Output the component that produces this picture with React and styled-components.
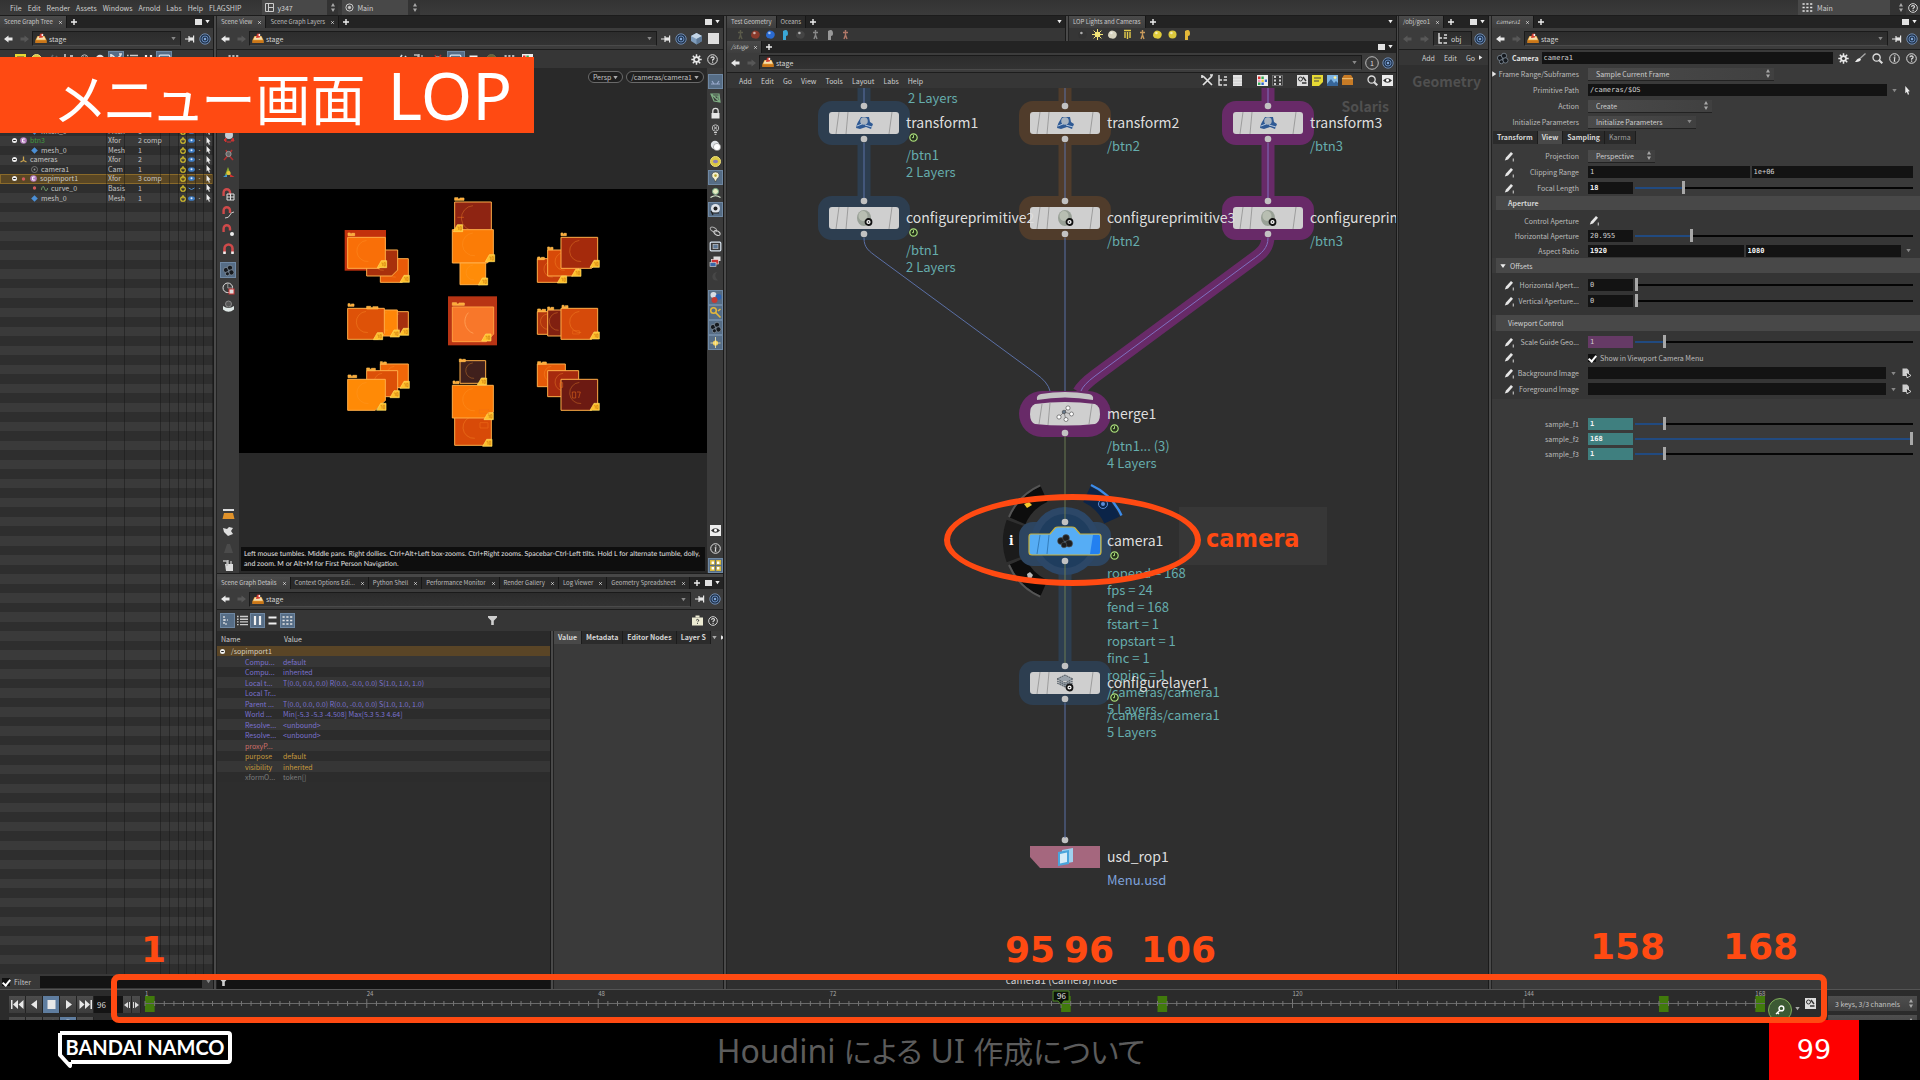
import React from "react";
import styled, { createGlobalStyle, css } from "styled-components";

const Global = createGlobalStyle`
  * { box-sizing: border-box; }
  body { margin: 0; background: #000; }
  body, button, input, select {
    font-family: "Noto Sans CJK JP", "Noto Sans", sans-serif;
    font-size: 7px;
    color: #c4c4c4;
  }
  button, input, select { border: 0; padding: 0; margin: 0; background: none; border-radius: 0; }
  svg { display: block; flex: none; }
`;

const ORANGE = "#ff4a12";

/* ---------- shell ---------- */
const Page = styled.div`
  position: relative;
  height: 100vh;
  display: flex;
  flex-direction: column;
  overflow: hidden;
  background: #000;
`;
const MenuBar = styled.header`
  height: 16px;
  flex: none;
  display: flex;
  align-items: center;
  background: linear-gradient(#333, #3b3b3b);
  border-bottom: 1px solid #1c1c1c;
`;
const Menus = styled.nav`
  display: flex;
  gap: ${(p) => p.$gap || 6}px;
  padding-left: ${(p) => p.$pad || 10}px;
`;
const MenuItem = styled.button`
  line-height: 14px;
  font-size: 7px;
  color: #cfcfcf;
  white-space: nowrap;
`;
const TopSelect = styled.label`
  display: flex;
  align-items: center;
  gap: 3px;
  height: 15px;
  width: ${(p) => p.$w}px;
  margin-left: ${(p) => p.$ml || 0}px;
  padding: 0 3px;
  background: linear-gradient(90deg, #484848 85%, #333 85%);
  select { appearance: none; flex: 1; min-width: 0; font-size: 7px; line-height: 12px; color: #d0d0d0; }
`;
const Spacer = styled.div`flex: 1;`;

const Desk = styled.main`
  flex: 1;
  min-height: 0;
  display: grid;
  grid-template-columns: 213fr 4px 506fr 4px 669fr 3px 89fr 4px 428fr;
  grid-template-rows: minmax(0, 1fr);
  background: #3a3a3a;
`;
const Split = styled.div`
  background: #4a4a4a;
  border-left: 1px solid #1a1a1a;
  border-right: 1px solid #222;
`;
const Pane = styled.section`
  position: relative;
  display: flex;
  flex-direction: column;
  min-width: 0;
  min-height: 0;
  overflow: hidden;
  background: ${(p) => p.$bg || "#3a3a3a"};
`;

/* ---------- tabs and path bars ---------- */
const TabRow = styled.div`
  height: 12px;
  flex: none;
  display: flex;
  align-items: stretch;
  background: #232323;
  padding-right: 2px;
`;
const TabButton = styled.button`
  display: flex;
  align-items: center;
  gap: 6px;
  padding: 0 4px;
  font-size: 6px;
  line-height: 10px;
  white-space: nowrap;
  color: ${(p) => (p.$on ? "#c8c8c8" : "#bdbdbd")};
  font-style: ${(p) => (p.$italic ? "italic" : "normal")};
  background: ${(p) => (p.$on ? "linear-gradient(#4a4a4a, #3e3e3e)" : "#2a2a2a")};
  border-right: 1px solid #171717;
`;
const IconButton = styled.button`
  flex: none;
  width: ${(p) => p.$w || 16}px;
  height: ${(p) => p.$h || p.$w || 16}px;
  display: grid;
  place-items: center;
  opacity: ${(p) => (p.$dim ? 0.3 : 1)};
  ${(p) => p.$on && css`background: #566d86; box-shadow: inset 0 0 0 1px #6f88a3;`}
`;
const Gap = styled.span`width: ${(p) => p.$w}px; flex: none;`;
const PathRow = styled.div`
  height: ${(p) => p.$h || 22}px;
  flex: none;
  display: flex;
  align-items: center;
  gap: 2px;
  padding: 0 2px;
  background: #3c3c3c;
  border-bottom: 1px solid #1d1d1d;
`;
const PathBox = styled.div`
  flex: 1;
  min-width: 0;
  height: 15px;
  display: flex;
  align-items: center;
  gap: 2px;
  padding: 0 4px 0 2px;
  background: linear-gradient(#2c2c2c, #333);
  border: 1px solid #1a1a1a;
  border-bottom-color: #4a4a4a;
  input { flex: 1; min-width: 0; font-size: 7px; line-height: 12px; color: #d6d6d6; }
`;

const Arrow = ({ flip, dim }) => (
  <svg width="10" height="8" viewBox="0 0 10 8" opacity={dim ? 0.35 : 1}>
    <path d={flip ? "M10 4 L5.5 .5 V2.6 H1.5 V5.4 H5.5 V7.5 Z" : "M0 4 L4.5 .5 V2.6 H8.5 V5.4 H4.5 V7.5 Z"} fill={dim ? "#8a8a8a" : "#e8e8e8"} />
  </svg>
);
const Caret = ({ c = "#aaa", s = 5 }) => (
  <svg width={s} height={s} viewBox="0 0 5 5"><path d="M.3 1 H4.7 L2.5 4.2 Z" fill={c} /></svg>
);
const RightCaret = ({ s = 6 }) => (
  <svg width={s} height={s} viewBox="0 0 5 5"><path d="M1 .2 V4.8 L4.4 2.5 Z" fill="#e6e6e6" /></svg>
);
const UpDown = () => (
  <svg width="4" height="9" viewBox="0 0 4 9"><path d="M2 0 L4 3.4 H0 Z M2 9 L4 5.6 H0 Z" fill="#a8a8a8" /></svg>
);
const Plus = () => (
  <svg width="6" height="6" viewBox="0 0 6 6"><path d="M3 0 V6 M0 3 H6" stroke="#eee" strokeWidth="1.4" /></svg>
);
const Cross = () => (
  <svg width="3" height="3" viewBox="0 0 3 3"><path d="M.3 .3 L2.7 2.7 M2.7 .3 L.3 2.7" stroke="#ddd" strokeWidth=".9" /></svg>
);
const PaneSquare = () => (
  <svg width="7" height="6" viewBox="0 0 7 6"><rect width="7" height="6" fill="#e2e2e2" /></svg>
);
const Stage = () => (
  <svg width="12" height="11" viewBox="0 0 12 11">
    <path d="M2.5 3 H9.5 L11.5 7 V10 H.5 V7 Z" fill="#e59a2c" />
    <path d="M2.8 3.4 H9.2 L10.7 6.8 H1.3 Z" fill="#f6dfb0" />
    <path d="M.5 7.4 H11.5 V10 H.5 Z" fill="#c9761a" />
    <path d="M4 5 L5 .8 L8 .4 L7.8 4.6 Z" fill="#d03b30" />
    <circle cx="7.4" cy="2" r="1" fill="#fff" />
  </svg>
);
const Pin = () => (
  <svg width="10" height="8" viewBox="0 0 10 8"><path d="M0 4 H4 M4 1 V7 M8.6 .6 V7.4" stroke="#e6e6e6" strokeWidth="1.2" /><path d="M4 2.4 H8.6 V5.6 H4 Z" fill="#e6e6e6" /></svg>
);
const Target = () => (
  <svg width="12" height="12" viewBox="0 0 12 12">
    <circle cx="6" cy="6" r="5.2" fill="#223650" stroke="#7f9cc4" strokeWidth=".8" />
    <circle cx="6" cy="6" r="3" fill="none" stroke="#6b8fc2" strokeWidth=".9" />
    <circle cx="6" cy="6" r="1.2" fill="#86a8d8" />
  </svg>
);
const Gear = ({ s = 11 }) => (
  <svg width={s} height={s} viewBox="0 0 11 11">
    <g stroke="#e8e8e8" strokeWidth="1.5"><path d="M5.5 .3 V10.7 M.3 5.5 H10.7 M1.8 1.8 L9.2 9.2 M9.2 1.8 L1.8 9.2" /></g>
    <circle cx="5.5" cy="5.5" r="3.3" fill="#e8e8e8" /><circle cx="5.5" cy="5.5" r="1.6" fill="#3a3a3a" />
  </svg>
);
const RingMark = ({ kind, s = 11 }) => (
  <svg width={s} height={s} viewBox="0 0 11 11" fill="none" stroke="#dedede">
    <circle cx="5.5" cy="5.5" r="4.8" />
    {kind === "help"
      ? <path d="M3.9 4.3 Q4 2.8 5.5 2.8 Q7.2 2.9 7.1 4.3 Q7 5.2 5.6 5.9 V6.8 M5.6 7.6 V8.7" strokeWidth="1.2" />
      : <path d="M5.8 2.3 V3.5 M4.7 4.8 H5.8 L5.3 8.3 H6.4" strokeWidth="1.1" />}
  </svg>
);
const Funnel = () => (
  <svg width="9" height="9" viewBox="0 0 9 9"><path d="M0 0 H9 V1.4 L5.8 4.8 V9 H3.2 V4.8 L0 1.4 Z" fill="#cfcfcf" /></svg>
);
const Magnifier = () => (
  <svg width="11" height="11" viewBox="0 0 11 11" fill="none" stroke="#dcdcdc"><circle cx="4.6" cy="4.6" r="3.6" strokeWidth="1.3" /><path d="M7.2 7.2 L10.3 10.3" strokeWidth="2" /></svg>
);
const Brush = () => (
  <svg width="11" height="10" viewBox="0 0 11 10"><path d="M10.5 .5 L5 5.5" stroke="#aaa" strokeWidth="1.3" /><path d="M0 9 Q2.4 5.2 4.6 5 L6 6.6 Q5 9.4 0 9 Z" fill="#eee" /></svg>
);
const Pointer = ({ h = 9 }) => (
  <svg width="5" height={h} viewBox="0 0 5 9"><path d="M.3 0 L4.9 5.2 L3.1 5.4 L4.1 8.3 L2.9 8.8 L1.9 5.9 L.3 7.2 Z" fill="#eee" /></svg>
);

const Tabs = ({ items, grow, end = true, pane = true }) => (
  <TabRow role="tablist">
    {items.map((t, i) => (
      <TabButton key={t} role="tab" $on={i === 0} $italic={t === "/stage" || t === "camera1"} aria-selected={i === 0}>
        <span>{t}</span>{!grow && <Cross />}
      </TabButton>
    ))}
    <IconButton aria-label="Add tab" $w={14} $h={11}><Plus /></IconButton>
    <Spacer />
    {end && pane && <IconButton aria-label="Pane layout" $w={10} $h={11}><PaneSquare /></IconButton>}
    {end && <IconButton aria-label="Pane menu" $w={8} $h={11}><Caret c="#eee" /></IconButton>}
  </TabRow>
);
const PathBar = ({ h, children, tail }) => (
  <PathRow $h={h}>
    <IconButton aria-label="Back" $w={13}><Arrow /></IconButton>
    <IconButton aria-label="Forward" $w={13}><Arrow flip dim /></IconButton>
    <PathBox>
      <Stage />
      <input aria-label="Path" defaultValue="stage" />
      <Caret c="#888" />
    </PathBox>
    {children || <><IconButton aria-label="Pin" $w={13}><Pin /></IconButton><IconButton aria-label="Follow" $w={13}><Target /></IconButton></>}
    {tail}
  </PathRow>
);

/* ---------- scene graph tree ---------- */
const ToolRow = styled.div`
  height: ${(p) => p.$h || 18}px;
  flex: none;
  display: flex;
  align-items: center;
  gap: ${(p) => p.$gap || 0}px;
  padding: 0 ${(p) => p.$pr || 3}px 0 ${(p) => p.$pad || 3}px;
  background: #363636;
`;
const TreeHead = styled.div`height: 11px; flex: none; background: #2c2c2c;`;
const TreeBody = styled.div`
  flex: 1;
  min-height: 0;
  display: grid;
  grid-auto-rows: minmax(0, 1fr);
`;
const TreeRow = styled.div`
  min-height: 0;
  display: grid;
  grid-template-columns: 107fr 18fr 36fr 9fr 9fr 8fr 9fr 8fr 9fr;
  grid-template-rows: minmax(0, 1fr);
  font-size: 7px;
  line-height: 9px;
  white-space: nowrap;
  background: ${(p) => (p.$sel ? "#5a4724" : p.$odd ? "#2e2e2e" : "#3a3a3a")};
  ${(p) => p.$sel && css`box-shadow: inset 0 0 0 1px #8a6a2a;`}
  > * { border-right: 1px solid rgba(20, 20, 20, 0.45); min-width: 0; min-height: 0; display: flex; align-items: center; }
`;
const TreeName = styled.div`
  padding-left: ${(p) => p.$d}px;
  gap: 3px;
  color: ${(p) => p.$c || "#c6c6c6"};
`;
const TreeCell = styled.div`padding-left: ${(p) => p.$pl || 0}px; justify-content: ${(p) => (p.$mid ? "center" : "start")};`;

const Knob = () => <svg width="5" height="5" viewBox="0 0 5 5"><circle cx="2.5" cy="2.5" r="2.5" fill="#eee" /><path d="M1.2 2.5 H3.8" stroke="#222" /></svg>;
const Glyph = ({ k }) => (
  <svg width="7" height="7" viewBox="0 0 7 7">
    {k === "mesh" && <path d="M3.5 .2 L6.8 3.5 L3.5 6.8 L.2 3.5 Z" fill="#4b8fd6" />}
    {k === "comp" && <><circle cx="3.5" cy="3.5" r="3.3" fill="#b77fc0" /><path d="M4.8 2 H2.6 V5 H4.8" stroke="#fff" fill="none" /></>}
    {k === "xf" && <path d="M3.5 .5 V5 M.5 6 L3.5 4.5 L6.5 6" stroke="#c9a24e" fill="none" strokeWidth="1.3" />}
    {k === "cam" && <><circle cx="3.5" cy="3.5" r="3" fill="#2a2a2a" stroke="#777" /><circle cx="3.5" cy="3.5" r="1" fill="#999" /></>}
    {k === "curve" && <path d="M.2 5 Q2 -1.5 3.5 3.5 T6.8 3" stroke="#6d9a68" fill="none" />}
  </svg>
);
const Power = () => <svg width="6" height="7" viewBox="0 0 6 7" fill="none" stroke="#d9c22b" strokeWidth="1.1"><circle cx="3" cy="4" r="2.3" /><path d="M3 0 V3.4" /></svg>;
const Eye = ({ off }) => <svg width="7" height="5" viewBox="0 0 7 5">{off ? <path d="M.5 2 Q3.5 5 6.5 2" stroke="#4d8dd0" fill="none" /> : <><ellipse cx="3.5" cy="2.5" rx="3.4" ry="2.3" fill="#3d7cc4" /><circle cx="3.5" cy="2.3" r="1" fill="#dfeeff" /></>}</svg>;

const TREE = {
  5: { n: "mesh_0", t: "Mesh", c: "1", g: "mesh", d: 31 },
  6: { n: "btn3", t: "Xfor", c: "2 comp", g: "comp", d: 12, knob: 1, col: "#3f9a3f" },
  7: { n: "mesh_0", t: "Mesh", c: "1", g: "mesh", d: 31 },
  8: { n: "cameras", t: "Xfor", c: "2", g: "xf", d: 12, knob: 1 },
  9: { n: "camera1", t: "Cam", c: "1", g: "cam", d: 31 },
  10: { n: "sopimport1", t: "Xfor", c: "3 comp", g: "comp", d: 12, knob: 1, dot: 1, sel: 1 },
  11: { n: "curve_0", t: "Basis", c: "1", g: "curve", d: 31, dot: 1, off: 1 },
  12: { n: "mesh_0", t: "Mesh", c: "1", g: "mesh", d: 31 },
};
const Dot = () => <svg width="7" height="4" viewBox="0 0 7 4"><circle cx="3.5" cy="2" r="1.7" fill="#d05a5a" /></svg>;

const Tree = () => (
  <TreeBody>
    {Array.from({ length: 94 }, (_, i) => {
      const r = TREE[i];
      return (
        <TreeRow key={i} $odd={i % 2 === 1} $sel={r && r.sel}>
          <TreeName $d={r ? r.d : 0} $c={r && r.col}>
            {r && r.knob && <Knob />}{r && r.dot && <Dot />}{r && <Glyph k={r.g} />}{r && <span>{r.n}</span>}
          </TreeName>
          <TreeCell $pl={1}>{r && r.t}</TreeCell>
          <TreeCell $pl={13}>{r && r.c}</TreeCell>
          <TreeCell />
          <TreeCell />
          <TreeCell $mid>{r && <Power />}</TreeCell>
          <TreeCell $mid>{r && <Eye off={r.off} />}</TreeCell>
          <TreeCell $mid>{r && "·"}</TreeCell>
          <TreeCell $mid>{r && <Pointer h={8} />}</TreeCell>
        </TreeRow>
      );
    })}
  </TreeBody>
);
const FilterRow = styled.div`
  height: 15px;
  flex: none;
  display: flex;
  align-items: center;
  gap: 4px;
  padding: 1px 2px;
  background: ${(p) => p.$bg || "#383838"};
  label { display: flex; align-items: center; gap: 4px; width: 34px; font-size: 7px; line-height: 12px; }
`;
const Field = styled.input`
  flex: ${(p) => (p.$w ? "none" : 1)};
  width: ${(p) => (p.$w ? `${p.$w}px` : "auto")};
  min-width: 0;
  height: ${(p) => p.$h || 12}px;
  padding: 0 2px;
  font-family: "DejaVu Sans Mono", monospace;
  font-size: 7px;
  font-weight: ${(p) => (p.$b ? 700 : 400)};
  color: ${(p) => (p.$b ? "#f2f2f2" : "#d0d0d0")};
  background: ${(p) => p.$bg || "#131313"};
`;
const Check = styled.input.attrs({ type: "checkbox" })`
  appearance: none;
  width: 8px;
  height: 8px;
  background: #111;
  display: grid;
  place-items: center;
  &:checked::after {
    content: "";
    width: 3px;
    height: 6px;
    border: solid #fff;
    border-width: 0 2px 2px 0;
    transform: rotate(40deg);
  }
`;

/* ---------- scene view ---------- */
const ViewArea = styled.div`
  height: 505px;
  flex: none;
  display: flex;
  background: #292929;
`;
const SideBar = styled.div`
  width: ${(p) => p.$w}px;
  flex: none;
  display: flex;
  flex-direction: column;
  align-items: center;
  padding: ${(p) => p.$pad};
  background: #3a3a3a;
`;
const ToolGroup = styled.div`
  display: flex;
  flex-direction: column;
  gap: ${(p) => p.$gap || 0}px;
  margin-top: ${(p) => p.$mt || 0}px;
`;
const Viewport = styled.div`
  flex: 1;
  min-width: 0;
  display: flex;
  flex-direction: column;
`;
const Pills = styled.div`
  height: 121px;
  flex: none;
  display: flex;
  justify-content: flex-end;
  align-items: flex-start;
  gap: 3px;
  padding: 3px 3px 0;
`;
const Pill = styled.button`
  height: 12px;
  display: flex;
  align-items: center;
  gap: 2px;
  padding: 0 4px;
  line-height: 10px;
  border: 1px solid #6a6a6a;
  border-radius: 6px;
  background: #1f1f1f;
`;
const Render = styled.svg`width: 100%; height: auto; aspect-ratio: 1404 / 791; background: #000;`;
const Hint = styled.p`
  margin: auto 2px 2px;
  padding: 2px 3px;
  font-family: Lato, "Noto Sans", sans-serif;
  font-size: 7px;
  line-height: 10px;
  text-rendering: geometricPrecision;
  color: #e2e2e2;
  background: #0e0e0e;
`;
const HSplit = styled.div`height: 4px; flex: none; background: #474747; border-top: 1px solid #1d1d1d;`;

const box = (x, y, w, h, f, cut = 18) => [x, y, w, h, f, cut];
const TILES = [
  box(511, 776, 84, 71, "#e85a08"), box(470, 750, 93, 78, "#a8300c"), box(413, 712, 113, 93, "#f96f08"),
  box(734, 606, 110, 110, "#8e2412"), box(727, 689, 123, 100, "#fb7c06"), box(750, 789, 77, 65, "#ff8c08"),
  box(982, 776, 84, 71, "#c63c0a"), box(1013, 750, 93, 78, "#d84a08"), box(1053, 712, 110, 93, "#a42a0c"),
  box(540, 935, 55, 68, "#a5300e"), box(500, 930, 62, 78, "#ff8608"), box(413, 925, 110, 93, "#de5208"),
  box(982, 935, 62, 68, "#b2360e"), box(1013, 930, 60, 78, "#802010"), box(1053, 925, 110, 93, "#d64a0a"),
  box(511, 1092, 84, 71, "#f16708"), box(470, 1112, 93, 78, "#dc5008"), box(413, 1138, 113, 93, "#ff8a06", 30),
  box(750, 1082, 77, 68, "#40201c"), box(734, 1240, 110, 96, "#d84a08"), box(727, 1156, 123, 98, "#fb7806"),
  box(982, 1092, 84, 68, "#e55a08"), box(1013, 1112, 93, 78, "#a62a0e"), box(1053, 1138, 110, 93, "#6c1a12"),
];
const TITLES = [[414, 696, 20], [734, 590, 28], [1053, 696, 16], [1013, 738, 16], [983, 768, 20], [414, 908, 18], [470, 916, 34], [983, 924, 24], [1013, 918, 18], [1056, 913, 18], [414, 1122, 26], [470, 1101, 26], [511, 1082, 18], [748, 1074, 18], [983, 1082, 26], [727, 905, 36], [729, 1140, 18]];
const BADGES = [[570, 826], [502, 782], [826, 764], [805, 834], [1140, 781], [1085, 808], [1042, 828], [490, 998], [540, 990], [568, 985], [1140, 996], [500, 1210], [540, 1172], [570, 1144], [822, 1238], [818, 1318], [802, 1134], [1140, 1210], [815, 1002], [730, 674]];
const RenderedMenus = () => (
  <Render viewBox="87 567 1404 791" role="img" aria-label="Rendered menu tiles">
    <rect x="404" y="690" width="124" height="122" fill="#c2300c" />
    {TILES.map(([x, y, w, h, f, c], i) => (
      <g key={i}>
        <path d={`M${x} ${y} H${x + w} V${y + h - c} L${x + w - c} ${y + h} H${x} Z`} fill={f} stroke="#ffae48" strokeWidth="3" />
        <path d={`M${x + w * 0.5} ${y + h * 0.1} A${h * 0.33} ${h * 0.33} 0 0 0 ${x + w * 0.55} ${y + h * 0.78}`} fill="none" stroke="#ff9a30" strokeOpacity=".4" strokeWidth="2.5" />
      </g>
    ))}
    <rect x="714" y="889" width="147" height="147" fill="#b83414" />
    <path d="M727 921 H851 V1002 L829 1025 H727 Z" fill="#f8772a" stroke="#ffa040" strokeWidth="3" />
    <path d="M775 938 A38 38 0 0 0 790 1000" fill="none" stroke="#ff9b50" strokeWidth="3" />
    {TITLES.map(([x, y, w], i) => <path key={i} d={`M${x} ${y + 3} h${w * 0.35} v4 h${w * 0.2} v-3 h${w * 0.45} v7 h-${w} Z`} fill="#ffa838" stroke="#ffc050" strokeWidth="2" />)}
    {BADGES.map(([x, y], i) => <path key={i} d={`M${x} ${y + 21} L${x + 12} ${y} H${x + 28} V${y + 21} Z`} fill="#ffc02c" stroke="#ffdc62" strokeWidth="2" />)}
    {BADGES.map(([x, y], i) => <path key={i} d={`M${x + 12} ${y + 7} h4 v9 M${x + 20} ${y + 6} h4 v10 h-4 Z`} fill="none" stroke="#c2700c" strokeWidth="1.5" />)}
    <g fill="none" stroke="#f0701a" strokeWidth="2" strokeOpacity=".8">
      <path d="M1087 1176 h10 v18 h-10 Z M1101 1176 h10 l-5 18 M1050 1148 h8 v14 h-8 Z M1088 992 h20 v10 h-20 Z M808 1230 h28 v10 h-28 Z M810 1268 h24 v16 h-24 Z M742 652 h20" />
    </g>
  </Render>
);

const Tool = ({ k }) => (
  <svg width="13" height="13" viewBox="0 0 13 13" fill="none">
    {k === "magnet" && <><path d="M2.5 11 V6.5 A4 4 0 0 1 10.5 6.5 V11" stroke="#cf4a4a" strokeWidth="2.6" /><path d="M2.5 9.5 V12 M10.5 9.5 V12" stroke="#eee" strokeWidth="2.6" /></>}
    {k === "snapgrid" && <><path d="M1.6 8 V4.4 A3.2 3.2 0 0 1 8 4.4 V7" stroke="#cf4a4a" strokeWidth="2.4" /><path d="M5 6 H12 V12 H5 Z M8.5 6 V12 M5 9 H12" stroke="#ddd" /></>}
    {k === "snapcurve" && <><path d="M1.6 8 V4.4 A3.2 3.2 0 0 1 8 4.4 V7" stroke="#cf4a4a" strokeWidth="2.4" /><path d="M3 12 Q7 12 8 9 T12 6" stroke="#ccc" /></>}
    {k === "snappoint" && <><path d="M1.6 8 V4.4 A3.2 3.2 0 0 1 8 4.4 V6.6" stroke="#cf4a4a" strokeWidth="2.4" /><circle cx="10" cy="10" r="2" fill="#eee" /></>}
    {k === "handle" && <><circle cx="7" cy="5" r="4" fill="#c4ccd4" /><path d="M2 10 L4 8 V12 Z M11 8 L12 11 L9 11 Z M5 12 H9" fill="#c33" stroke="#c33" /></>}
    {k === "pose" && <><path d="M2 12 L6.5 7 L11 12 M4 2 L6.5 7 L10 2" stroke="#b03030" strokeWidth="1.6" /><circle cx="6.5" cy="6" r="2.6" fill="#666" stroke="#999" /></>}
    {k === "axes" && <><path d="M6 1 L9 9 L3 9 Z" fill="#8fae2c" /><circle cx="6.6" cy="7" r="2" fill="#e6c23a" /><path d="M8 8 L12.5 11 L8 11 Z" fill="#c33" /><path d="M5 8 L1 11 L5 11 Z" fill="#49c" /></>}
    {k === "reel" && <g fill="#15191e" stroke="#8a96a4" strokeWidth=".7"><circle cx="4" cy="6" r="2.6" /><circle cx="8" cy="3.8" r="2.6" /><circle cx="9.4" cy="8.4" r="2.6" /><circle cx="5.4" cy="9.8" r="2" /></g>}
    {k === "region" && <><circle cx="5.8" cy="5.8" r="4.8" stroke="#ddd" /><path d="M5.8 1 V6 H11" stroke="#999" /><rect x="7" y="7" width="5" height="5" fill="#ddd" stroke="#c33" /></>}
    {k === "dome" && <><circle cx="6.5" cy="4" r="3" fill="#555" stroke="#888" /><path d="M1 6 Q6.5 10 12 6 V9.5 Q6.5 14 1 9.5 Z" fill="#dfe8e6" /></>}
    {k === "tray" && <><path d="M1 2 H12" stroke="#ddd" strokeWidth="2" /><path d="M2 5 H11 L12.5 11 H.5 Z" fill="#e0922a" /></>}
    {k === "hand" && <path d="M1 3 L5 4 L7 2 L11 3 L9 6 L11 9 L6 11 L2 7 Z" fill="#dedede" />}
    {k === "cone" && <path d="M5 2 H8 L11 11 H2 Z" fill="#4b4b4b" />}
    {k === "cup" && <><path d="M3 5 H11 V12 H4 Z" fill="#ddd" /><path d="M1 2 H5 V7 M6 1 V5 M9 2 V5" stroke="#bbb" strokeWidth="1.4" /></>}
    {k === "plane" && <path d="M2 9 H11 M3 6 L5 9 M10 6 L8 9" stroke="#9ac" strokeWidth="1.2" />}
    {k === "wire" && <path d="M2 3 L10 3 L11 11 L5 10 Z M4 5 H9 V9 M2 3 L11 11" stroke="#7fae84" strokeWidth="1.2" />}
    {k === "lock" && <><path d="M3.8 6 V4 A2.7 2.7 0 0 1 9.2 4 V6" stroke="#ddd" strokeWidth="1.3" /><rect x="2.5" y="6" width="8" height="5.5" fill="#e6e6e6" /></>}
    {k === "bulb" && <><circle cx="6.5" cy="5" r="3.2" stroke="#bbb" /><path d="M5 3.6 L8 6.4 M8 3.6 L5 6.4 M5 9.5 H8 M5.6 11.3 H7.4" stroke="#ccc" /></>}
    {k === "sphere" && <><circle cx="6" cy="6" r="4.2" fill="#dfe3e6" /><circle cx="8" cy="8" r="3.6" fill="#fff" stroke="#888" strokeWidth=".6" /></>}
    {k === "ring" && <><circle cx="6.5" cy="6.5" r="5" fill="#dcc944" stroke="#efe07a" /><ellipse cx="6.5" cy="6.5" rx="2.6" ry="1.8" fill="#8a7fb8" /></>}
    {k === "light" && <><path d="M6.5 1 A3.4 3.4 0 0 1 8.4 7.4 L6.5 11 L4.6 7.4 A3.4 3.4 0 0 1 6.5 1 Z" fill="#f2f0cf" stroke="#333" strokeWidth=".6" /><circle cx="6.5" cy="4.6" r="1.3" fill="#b8a62c" /></>}
    {k === "lightfloor" && <><circle cx="6.5" cy="4.4" r="3" fill="#e6ecc0" stroke="#7a8" /><path d="M1.5 10.5 Q6.5 7 11.5 10.5" stroke="#d8e8d0" strokeWidth="1.2" /></>}
    {k === "cube" && <><path d="M6.5 1 L12 4 V9 L6.5 12.4 L1 9 V4 Z" fill="#7f9dbd" /><path d="M6.5 1 L12 4 L6.5 7 L1 4 Z" fill="#c4d5e6" /><path d="M6.5 7 L12 4 V9 L6.5 12.4 Z" fill="#5d7896" /></>}
    {k === "square" && <rect x="1" y="1" width="11" height="11" fill="#dfdfdf" />}
    {k === "persp" && <><circle cx="6.5" cy="5.5" r="4.5" fill="#dfe4ea" /><circle cx="6.5" cy="5.5" r="2" fill="#222" /><path d="M3 10 L10 10 M2 8 L4 12" stroke="#222" strokeWidth="1.2" /></>}
    {k === "link" && <><ellipse cx="4.5" cy="4.5" rx="3.4" ry="2" stroke="#aaa" transform="rotate(30 4.5 4.5)" /><ellipse cx="8" cy="8" rx="3.4" ry="2" stroke="#ccc" transform="rotate(30 8 8)" /></>}
    {k === "frame" && <><rect x="1.2" y="2.2" width="10.6" height="8.6" rx="1" stroke="#dbe7f2" strokeWidth="1.2" /><rect x="4" y="4.3" width="5" height="4.4" fill="#5d7896" stroke="#ccc" strokeWidth=".6" /></>}
    {k === "layers" && <><rect x="4.5" y="1.5" width="7" height="4.5" fill="#ddd" /><rect x="2.5" y="4.5" width="7" height="4.5" fill="#c33" stroke="#eee" strokeWidth=".6" /><rect x="1" y="7.5" width="6" height="4" fill="#3a66a8" stroke="#ddd" strokeWidth=".6" /></>}
    {k === "moon" && <path d="M8 2 Q4 6 9 10.5 Q3 11 3.4 6 Q4 2.6 8 2 Z" fill="#666" />}
    {k === "balls" && <><circle cx="4.5" cy="4" r="3" fill="#d8dde4" /><circle cx="9.4" cy="6" r="3" fill="#2c62b4" /><circle cx="5.5" cy="9" r="3" fill="#c23a34" /></>}
    {k === "key" && <><circle cx="4.5" cy="4.5" r="2.8" stroke="#e4b83c" strokeWidth="1.5" /><path d="M6.4 6.4 L11.5 11.5 M9 5 L11.5 3" stroke="#e4b83c" strokeWidth="1.6" /></>}
    {k === "spark" && <><circle cx="6.5" cy="7" r="2.6" fill="#f4cf4e" /><path d="M6.5 1 V12 M1.5 7 H11.5" stroke="#f7e7a6" strokeWidth=".8" /></>}
    {k === "eye" && <><rect x="1" y="1" width="11" height="11" fill="#ececec" /><path d="M2 6.5 Q6.5 1.8 11 6.5 Q6.5 11 2 6.5 Z" fill="#333" /><circle cx="6.5" cy="6.3" r="1.5" fill="#fff" /></>}
    {k === "quad" && <><rect x="1" y="1" width="11" height="11" fill="#d9b93c" /><path d="M6.5 1 V12 M1 6.5 H12" stroke="#5b6f88" strokeWidth="1.4" /><path d="M2.6 2.6 H5 V5 H2.6 Z M8 2.6 H10.4 V5 H8 Z M2.6 8 H5 V10.4 H2.6 Z M8 8 H10.4 V10.4 H8 Z" fill="#fff" /></>}
    {k === "tree" && <path d="M3 2 V10 H7 M3 6 H7" stroke="#eee" strokeWidth="1.2" strokeDasharray="2 1" />}
    {k === "list" && <path d="M1 2.5 H2.6 M4 2.5 H12 M1 5.2 H2.6 M4 5.2 H12 M1 7.9 H2.6 M4 7.9 H12 M1 10.6 H2.6 M4 10.6 H12" stroke="#ccc" strokeWidth="1.4" />}
    {k === "bars" && <path d="M4 2 V11 M9 2 V11" stroke="#f0f0f0" strokeWidth="2.2" />}
    {k === "rows" && <path d="M2.5 3.5 H10.5 M2.5 9.5 H10.5" stroke="#f0f0f0" strokeWidth="2.2" />}
    {k === "dots" && <path d="M1.5 3 H12 M1.5 6.5 H12 M1.5 10 H12" stroke="#e4e4e4" strokeWidth="1.6" strokeDasharray="2.2 1.6" />}
    {k === "camq" && <><rect x="1" y="3.5" width="11" height="8" fill="#ecead2" /><path d="M4.5 3.5 V1.5 H8.5 V3.5" fill="#ecead2" /><path d="M5.2 6.2 Q6.5 4.6 7.8 6.2 Q7.6 7.4 6.5 8 M6.5 9.2 V10" stroke="#333" /></>}
    {k === "slash" && <path d="M2 10 L7 2 M5 12 L11 3" stroke="#cfd8df" strokeWidth="1.6" />}
    {k === "wrench" && <path d="M2 2 L11 11 M11 2 L2 11 M1 1 V4 M12 1 H9" stroke="#e2e2e2" strokeWidth="1.7" />}
    {k === "hier" && <path d="M3 1 V11 H6 M3 6 H6 M8 3 H11 M7.5 6 H11 M7.5 11 H11" stroke="#ddd" strokeWidth="1.4" />}
    {k === "page" && <><rect x="2" y="1" width="9" height="11" fill="#e4e4e4" /><path d="M2 4 H11 M2 7 H11 M2 10 H11" stroke="#bbb" strokeWidth=".6" /></>}
    {k === "palette" && <><rect x="1" y="1" width="11" height="11" fill="#eee" /><path d="M2 2.5 H4.5 V5 H2 Z" fill="#d33" /><path d="M5.4 2.5 H7.8 V5 H5.4 Z M2 8.5 H4.5 V11 H2 Z" fill="#3a5" /><path d="M8.8 5.6 H11 V8 H8.8 Z M5.4 8.5 H7.8 V11 H5.4 Z" fill="#36c" /><path d="M2 5.6 H4.5 V8 H2 Z" fill="#e9b" /><path d="M5.4 5.6 H7.8 V8 H5.4 Z" fill="#ec4" /></>}
    {k === "dotgrid" && <><rect x="1.5" y="1.5" width="10" height="10" stroke="#777" strokeWidth=".8" /><path d="M3 3 H12 M3 6.5 H12 M3 10 H12" stroke="#ccc" strokeWidth="1.8" strokeDasharray="2 3" /></>}
    {k === "image" && <><rect x="1" y="1" width="11" height="11" fill="#ddd" /><circle cx="4.5" cy="5" r="2" stroke="#333" /><path d="M6 9 H10.5 M7 3 L10 7" stroke="#333" strokeWidth="1.4" /></>}
    {k === "note" && <><rect x="1" y="1" width="11" height="11" fill="#e6d934" /><path d="M3 4 H10 M3 7 H8" stroke="#444" /><path d="M8 12 L12 8 V12 Z" fill="#333" /></>}
    {k === "photo" && <><rect x="1" y="1" width="11" height="11" fill="#7db4e4" /><path d="M1 10 L5 5 L8 9 L10 7 L12 9 V12 H1 Z" fill="#37669a" /><circle cx="9" cy="3.6" r="1.4" fill="#fff09a" /></>}
    {k === "crate" && <><path d="M1 4 L3 1 H10 L12 4 V11 H1 Z" fill="#c77b26" /><path d="M1 4.6 H12" stroke="#eab565" strokeWidth="1.2" /></>}
  </svg>
);
const Tools = ({ list, on = [], dim = [], w = 15, h }) =>
  list.map((k, i) => (
    <IconButton key={i} aria-label={k} $w={w} $h={h || w} $on={on.includes(i)} $dim={dim.includes(i)}><Tool k={k} /></IconButton>
  ));

/* ---------- details ---------- */
const Details = styled.div`
  flex: 1;
  min-height: 0;
  display: grid;
  grid-template-columns: 333fr 4px 169fr;
`;
const DetailTable = styled.table`
  width: 100%;
  border-collapse: collapse;
  table-layout: fixed;
  th { height: 15px; padding: 0 4px; font-size: 7px; line-height: 12px; font-weight: 400; text-align: left; background: #2a2a2a; color: #d0d0d0; }
  td { padding: 0 3px; font-size: 7px; line-height: 10px; white-space: nowrap; overflow: hidden; text-overflow: ellipsis; }
`;
const DetailRow = styled.tr`
  height: ${(p) => (p.$odd ? 11 : 10)}px;
  color: ${(p) => p.$c};
  background: ${(p) => (p.$sel ? "#5a4526" : p.$odd ? "#363636" : "#2c2c2c")};
`;
const RootLine = styled.div`display: flex; align-items: center; gap: 6px;`;
const PropName = styled.div`padding-left: 25px;`;
const TX = "T(0.0, 0.0, 0.0) R(0.0, -0.0, 0.0) S(1.0, 1.0, 1.0)";
const DETAILS = [
  ["Compu...", "default", "#7a72d0"], ["Compu...", "inherited", "#7a72d0"], ["Local t...", TX, "#7a72d0"], ["Local Tr...", "", "#7a72d0"],
  ["Parent ...", TX, "#7a72d0"], ["World ...", "Min[-5.3 -5.3 -4.508] Max[5.3 5.3 4.64]", "#7a72d0"], ["Resolve...", "<unbound>", "#7a72d0"], ["Resolve...", "<unbound>", "#7a72d0"],
  ["proxyP...", "", "#d0706a"], ["purpose", "default", "#c79a3c"], ["visibility", "inherited", "#c79a3c"], ["xformO...", "token[]", "#7c7c7c"],
];
const MiniTab = styled.button`
  height: 13px;
  padding: 0 4px;
  font-size: 7px;
  line-height: 11px;
  white-space: nowrap;
  color: ${(p) => (p.$dim ? "#a0a0a0" : "#d6d6d6")};
  font-weight: ${(p) => (p.$b ? 700 : 400)};
  background: ${(p) => (p.$on ? "#484848" : "#2b2b2b")};
  border-right: 1px solid #1c1c1c;
`;
const Row = styled.div`display: flex; align-items: center;`;

/* ---------- network ---------- */
const Shelves = styled.div`
  display: grid;
  grid-template-columns: 338fr 4px 327fr;
  flex: none;
`;
const Canvas = styled.div`
  position: relative;
  flex: 1;
  min-height: 0;
  overflow: hidden;
  background: #2f2f2f;
`;
const Wires = styled.svg`position: absolute; left: 0; top: 0;`;
const NodeText = styled.div`
  position: absolute;
  left: ${(p) => p.$x + 42}px;
  top: ${(p) => p.$y - 10}px;
  font-size: 14px;
  line-height: 18px;
  color: #dedede;
  white-space: nowrap;
`;
const ClockLine = styled.div`height: 12px; padding: 2px 3px;`;
const Info = styled.div`
  font-size: 13px;
  line-height: 17px;
  margin-top: ${(p) => p.$mt || 0}px;
  color: ${(p) => p.$c || "#66adad"};
`;
const Loose = styled(Info)`position: absolute; left: 181px; top: 1px;`;
const CanvasStatus = styled.div`
  position: absolute;
  left: 0;
  right: 0;
  bottom: 2px;
  font-size: 10px;
  line-height: 14px;
  text-align: center;
  color: #d2d2d2;
`;
const Watermark = styled.div`
  position: absolute;
  right: 7px;
  top: ${(p) => p.$t}px;
  font-size: 14px;
  line-height: 20px;
  font-weight: 700;
  color: #505050;
`;
const HALO = { blue: "#2d3e50", brown: "#503c2b", purple: "#682a68" };
const Clock = () => (
  <svg width="9" height="9" viewBox="0 0 9 9" fill="none" stroke="#a9dc7a"><circle cx="4.5" cy="4.5" r="3.7" strokeWidth="1.2" fill="#24301c" /><path d="M4.5 2.2 V4.7 H3" /></svg>
);
const Body = ({ x, y, hue, icon, top = true }) => (
  <g transform={`translate(${x} ${y})`}>
    <rect x="-46" y="-22" width="92" height="44" rx="14" fill={HALO[hue]} />
    <rect x="-35" y="-11" width="70" height="22" rx="3" fill="#cfcfcf" />
    <path d="M-25 -11 L-28 11 M-16 -11 L-18 11 M28 -11 L25 11" stroke="#8f8f8f" strokeWidth=".8" />
    {top && <circle cy="-17" r="3.3" fill="#c2c2c2" />}
    <circle cy="16" r="3.3" fill="#c2c2c2" />
    {icon === "xf" && <g><path d="M-6 -1 L-3 -6 L5 -6 L6 -1 L9 1 L7 6 L2 4 L-4 6 L-8 5 L-7 1 Z" fill="#2f5a94" /><circle cy="-2" r="3.8" fill="#a9b4c0" /><path d="M-7 3 L-2 1 M1 2 L8 4" stroke="#d6e2f0" strokeWidth=".8" /></g>}
    {icon === "prim" && <g><ellipse rx="7" ry="8" fill="#98a096" /><ellipse cx="-1" cy="-2" rx="4.5" ry="5" fill="#b8beb2" /><circle cx="4.5" cy="4" r="3" fill="#fff" stroke="#111" strokeWidth="1.8" /><circle cx="4.5" cy="4" r=".8" fill="#111" /></g>}
    {icon === "layer" && <g><path d="M-8 -4 L0 -8 L8 -4 L0 0 Z M-8 0 L0 4 L8 0 M-8 -2 L0 2 L8 -2" fill="#9aa3ab" stroke="#39414a" strokeWidth=".8" strokeDasharray="2 .6" /><circle cx="4.5" cy="4.5" r="3" fill="#fff" stroke="#111" strokeWidth="1.8" /><circle cx="4.5" cy="4.5" r=".8" fill="#111" /></g>}
  </g>
);
const seg = (a0, a1, r0, r1) => {
  const p = (a, r) => `${(r * Math.cos((a * Math.PI) / 180)).toFixed(1)} ${(-r * Math.sin((a * Math.PI) / 180)).toFixed(1)}`;
  return `M${p(a0, r0)} L${p(a0, r1)} A${r1} ${r1} 0 0 0 ${p(a1, r1)} L${p(a1, r0)} A${r0} ${r0} 0 0 1 ${p(a0, r0)} Z`;
};
const Graph = () => (
  <Wires width="669" height="901" viewBox="0 0 669 901">
    <g fill="none" strokeWidth="13">
      <path d="M137 0 V118" stroke={HALO.blue} /><path d="M338 0 V118" stroke={HALO.brown} /><path d="M541 0 V118" stroke={HALO.purple} />
      <path d="M541 148 C541 160 535 165 525 172 L368 288 Q356 297 352 304" stroke={HALO.purple} />
      <path d="M338 470 V580" stroke={HALO.blue} />
    </g>
    <Body x={137} y={35} hue="blue" icon="xf" /><Body x={338} y={35} hue="brown" icon="xf" /><Body x={541} y={35} hue="purple" icon="xf" />
    <Body x={137} y={130} hue="blue" icon="prim" /><Body x={338} y={130} hue="brown" icon="prim" /><Body x={541} y={130} hue="purple" icon="prim" />
    <Body x={338} y={595} hue="blue" icon="layer" />
    <g transform="translate(338 326)">
      <rect x="-46" y="-23" width="92" height="46" rx="23" fill={HALO.purple} />
      <path d="M-28 -14 Q-29 -19 -24 -20 Q0 -24 24 -20 Q29 -19 28 -14 Q0 -19 -28 -14 Z" fill="#c4c4c4" />
      <path d="M-30 -10 Q0 -14 30 -10 Q35 -8 35 0 Q35 8 30 10 Q0 13 -30 10 Q-35 8 -35 0 Q-35 -8 -30 -10 Z" fill="#cfcfcf" />
      <path d="M-23 -10 L-26 10 M-15 -11 L-17 11 M27 -10 L24 10" stroke="#8f8f8f" strokeWidth=".8" />
      <path d="M-6 3 L-1 -2 L3 -6 M-1 -2 L6 0 M-1 -2 L1 6" stroke="#777" strokeWidth=".8" /><g fill="#fff" stroke="#444" strokeWidth=".6"><circle cx="3" cy="-6" r="2.1" /><circle cx="6.5" cy="0" r="2" /><circle cx="-6" cy="3" r="2.1" /><circle cx="1" cy="5.5" r="2" /><circle cx="-1" cy="-2" r="1.8" fill="#678" /></g>
      <circle cy="19" r="3.3" fill="#c2c2c2" />
    </g>
    <g transform="translate(338 453)">
      <g fill="#0d0d0d"><path d={seg(114, 157, 43, 60)} /><path d={seg(160, 200, 43, 62)} fill="#1b1b1b" /><path d={seg(203, 246, 43, 60)} /></g>
      <g fill="none" stroke="#555" strokeWidth="2"><path d="M-24.8 -55.6 A61 61 0 0 0 -56 -24" /><path d="M-56 24 A61 61 0 0 0 -24.8 55.6" /></g>
      <path d={seg(24, 65, 43, 60)} fill="#0b2448" /><path d="M26 -56 A62 62 0 0 1 56.5 -25.5" fill="none" stroke="#3b8bea" strokeWidth="2.4" />
      <circle cx="38" cy="-37" r="4.5" fill="none" stroke="#5c8cd8" /><circle cx="38" cy="-37" r="2" fill="#5c8cd8" />
      <path d="M-41 -37 L-36 -39 L-33 -36 L-38 -33 Z" fill="#f4c82c" />
      <path d="M-38 33 L-35 31 L-32 34 L-34 38 H-37 Z" fill="#bbb" />
      <rect x="-46" y="-19" width="92" height="44" rx="14" fill="#2d4560" />
      <circle r="34" fill="#2c4767" /><circle r="27" fill="#1f3d5e" />
      <path d="M-34 -7 H-15 L-10 -13 Q-9 -14 -7 -14 H7 Q9 -14 10 -13 L15 -7 H34 Q36 -7 36 -4 V11 Q36 14 33 14 H-33 Q-36 14 -36 11 V-4 Q-36 -7 -34 -7 Z" fill="#56adf5" stroke="#c9b23c" strokeWidth="1.2" />
      <path d="M28 -6 H34 Q35 -5 35 -4 V11 Q35 13 33 13 H25 Z" fill="#2380f0" />
      <path d="M-25 -6 L-28 13 M-16 -6 L-18 13" stroke="#2a6ea8" strokeWidth=".8" />
      <g fill="#1d1d1d" stroke="#555" strokeWidth=".6"><circle cx="-4" cy="0" r="3.4" /><circle cx="1" cy="-3" r="3.4" /><circle cx="4" cy="2.5" r="3.6" /><circle cx="-1" cy="4" r="2.8" /></g>
      <circle cy="-19" r="3.3" fill="#c2c2c2" /><circle cy="20" r="3.3" fill="#c2c2c2" />
    </g>
    <g transform="translate(338 769)">
      <path d="M-35 -11 H35 V11 H-25 L-35 0 Z" fill="#a5677e" />
      <path d="M-3 -7 L8 -9 V5 L-3 7 Z" fill="#9fd0ee" /><path d="M-7 -5 L4 -7 V7 L-7 9 Z" fill="#4aa5dc" /><path d="M-5 -3 L2 -4.5 V5 L-5 6.5 Z" fill="#d6ecf8" />
      <circle cy="-17" r="3.3" fill="#c2c2c2" />
    </g>
    <g fill="none" stroke="#5b70a6" strokeWidth="1">
      <path d="M137 0 V15 M137 55 V110 M137 150 C137 160 142 163 150 169 L308 285 Q321 294 323 303" />
      <path d="M338 0 V15 M338 55 V110 M338 150 V303" />
      <path d="M541 0 V15 M541 55 V110 M541 150 C541 160 535 165 525 172 L368 288 Q356 297 354 303" stroke="#8070c0" />
      <path d="M338 348 V431 M338 476 V575" stroke="#6b7a52" /><path d="M338 615 V750" />
    </g>
  </Wires>
);
const Badge = styled.span`
  position: absolute;
  left: 282px;
  top: 444px;
  font: 700 12px/18px "DejaVu Serif", serif;
  color: #fff;
`;
const NODES = [
  { x: 137, y: 35, n: "transform1", clock: 1, info: ["/btn1", "2 Layers"] },
  { x: 338, y: 35, n: "transform2", info: ["/btn2"] },
  { x: 541, y: 35, n: "transform3", info: ["/btn3"] },
  { x: 137, y: 130, n: "configureprimitive2", clock: 1, info: ["/btn1", "2 Layers"] },
  { x: 338, y: 130, n: "configureprimitive3", info: ["/btn2"] },
  { x: 541, y: 130, n: "configureprimitive4", info: ["/btn3"] },
  { x: 338, y: 326, n: "merge1", clock: 1, info: ["/btn1... (3)", "4 Layers"] },
  { x: 338, y: 453, n: "camera1", clock: 1, info: ["ropend = 168", "fps = 24", "fend = 168", "fstart = 1", "ropstart = 1", "finc = 1", "ropinc = 1", "/cameras/camera1", "5 Layers"] },
  { x: 338, y: 595, n: "configurelayer1", clock: 1, info: ["/cameras/camera1", "5 Layers"] },
  { x: 338, y: 769, n: "usd_rop1", info: ["Menu.usd"], c: "#7ea2dc" },
];

const Shelf = ({ tabs, icons }) => (
  <div>
    <Tabs items={tabs} grow pane={false} />
    <ToolRow $h={13} $pad={6}>{icons}</ToolRow>
  </div>
);
const Blob = ({ c, k }) => (
  <svg width="11" height="11" viewBox="0 0 11 11">
    {k === "sun" && <path d="M5.5 0 V11 M0 5.5 H11 M1.6 1.6 L9.4 9.4 M9.4 1.6 L1.6 9.4" stroke={c} />}
    {k === "fig" && <path d="M5.5 1 V6 M3 3.5 H8 M5.5 6 L4 10 M5.5 6 L7 10" stroke={c} strokeWidth="1.4" />}
    {k === "area" && <path d="M2 1.5 H9 M3 3 V9 M5.5 3 V10 M8 3 V9" stroke={c} strokeWidth="1.4" />}
    {(!k || k === "sun") && <circle cx="5.5" cy="5.5" r={k ? 2.8 : 4} fill={c} />}
    {k === "blob" && <path d="M1 7 Q1 2 5 1.5 Q10 2 9.8 6 Q9 10 5 9.6 Q2 9.6 1 7 Z" fill={c} />}
    {k === "head" && <path d="M3 2 Q8 -1 8 5 Q8 7 6 7 V11 H3 Z" fill={c} />}
    {(k === "blob" || !k) && <circle cx="4.4" cy="4" r="1.3" fill="#fff" fillOpacity=".6" />}
  </svg>
);
const Blobs = ({ list }) => list.map(([k, c], i) => <IconButton key={i} aria-label={`Shelf tool ${i + 1}`} $w={15} $h={12}><Blob k={k} c={c} /></IconButton>);

/* ---------- parameters ---------- */
const ParamRow = styled.div`
  height: ${(p) => p.$h || 16}px;
  display: grid;
  grid-template-columns: 87px minmax(0, 1fr);
  column-gap: 9px;
  align-items: center;
  padding-right: 7px;
`;
const ParamLabel = styled.label`
  display: flex;
  align-items: center;
  justify-content: flex-end;
  padding-left: ${(p) => p.$pl || 0}px;
  gap: 2px;
  font-size: 7px;
  line-height: 14px;
  white-space: nowrap;
  color: #bcbcbc;
  svg:first-child { margin-right: auto; }
`;
const Controls = styled.div`display: flex; align-items: center; gap: ${(p) => p.$gap || 2}px; min-width: 0;`;
const Drop = styled.div`
  display: flex;
  align-items: center;
  width: ${(p) => p.$w}px;
  height: 13px;
  padding-right: 4px;
  background: linear-gradient(90deg, #4a4a4a, #404040);
  border-bottom: 1px solid #222;
  select { appearance: none; flex: 1; min-width: 0; padding-left: 8px; font-size: 7px; line-height: 12px; color: #cdcdcd; }
`;
const Slider = styled.input.attrs({ type: "range" })`
  appearance: none;
  flex: 1;
  min-width: 0;
  height: 13px;
  &::-webkit-slider-runnable-track {
    height: 2px;
    background: linear-gradient(90deg, #214a80 ${(p) => p.$v}%, #050505 ${(p) => p.$v}%);
  }
  &::-webkit-slider-thumb {
    appearance: none;
    width: 3px;
    height: 13px;
    margin-top: -6px;
    background: #a8a8a8;
  }
`;
const Section = styled.div`
  height: ${(p) => p.$h || 15}px;
  flex: none;
  display: flex;
  align-items: center;
  gap: 4px;
  margin-left: 4px;
  padding-left: ${(p) => p.$pl || 12}px;
  font-size: 7px;
  line-height: 14px;
  font-weight: ${(p) => (p.$b ? 700 : 400)};
  color: #d2d2d2;
  background: #484848;
`;
const Group = styled.div`padding: ${(p) => p.$pad}; background: ${(p) => p.$bg || "transparent"};`;
const Pencil = () => <svg width="11" height="11" viewBox="0 0 11 11"><path d="M.8 9.4 L2 6.6 L7 1 L9 2.8 L4 8.4 Z" fill="#e6e6e6" /><path d="M9.3 7.6 V10.4" stroke="#bbb" strokeWidth="1.2" /></svg>;
const DropBtn = () => <IconButton aria-label="Choose" $w={10} $h={12}><Caret c="#888" /></IconButton>;
const FileIcon = () => <svg width="10" height="11" viewBox="0 0 10 11"><path d="M.5 .5 H5 L7 2.5 V8 H.5 Z" fill="#ccc" /><path d="M4 4 L9 7.5 L5 9.8 Z" fill="#222" stroke="#eee" strokeWidth=".8" /></svg>;
const Param = ({ id, label, pen, tri, h, children, gap }) => (
  <ParamRow $h={h}>
    <ParamLabel htmlFor={id} $pl={tri ? 3 : 12}>{pen && <Pencil />}{tri && <RightCaret />}<span>{label}</span></ParamLabel>
    <Controls $gap={gap}>{children}</Controls>
  </ParamRow>
);
const NumSlider = ({ id, v, pct, b, bg }) => (
  <>
    <Field id={id} defaultValue={v} $w={45} $b={b} $bg={bg} />
    <Slider aria-label={`${id} slider`} defaultValue={pct} $v={pct} />
  </>
);
const NodeName = styled.div`
  height: 16px;
  flex: none;
  display: flex;
  align-items: center;
  gap: 3px;
  padding: 0 2px 0 4px;
  font-size: 7px;
  font-weight: 700;
  color: #e0e0e0;
`;

/* ---------- playbar and footer ---------- */
const PlayBar = styled.div`
  height: 31px;
  flex: none;
  display: flex;
  align-items: flex-start;
  padding: 6px 3px 0 9px;
  overflow: hidden;
  background: #2b2b2b;
  border-top: 1px solid #545454;
`;
const Stack = styled.div`display: flex; flex-direction: column; gap: 4px; flex: none;`;
const Transport = styled.div`display: flex; align-items: center; height: 17px;`;
const PlayBtn = styled.button`
  width: ${(p) => p.$w || 17}px;
  height: 17px;
  display: grid;
  place-items: center;
  background: ${(p) => (p.$on ? "#5f7d9f" : "linear-gradient(#4c4c4c, #3c3c3c)")};
  border-right: 1px solid #222;
`;
const Frame = styled.input`width: 29px; height: 17px; padding-left: 3px; background: #141414; font-size: 8px; color: #ddd;`;
const Track = styled.div`
  flex: 1;
  margin: -6px 3px 0 4px;
  svg { width: 100%; height: 30px; overflow: visible; }
`;
const KeyButton = styled.button`
  width: 24px;
  height: 24px;
  flex: none;
  margin-top: 2px;
  display: grid;
  place-items: center;
  border: 1px solid #7fae5a;
  border-radius: 50%;
  background: #3c5a34;
`;
const KeysButton = styled.button`
  width: 89px;
  height: 15px;
  display: flex;
  align-items: center;
  justify-content: space-between;
  padding: 0 4px 0 7px;
  font-size: 7px;
  line-height: 12px;
  background: linear-gradient(#4e4e4e, #404040);
`;
const Footer = styled.footer`
  height: 60px;
  flex: none;
  display: grid;
  grid-template-columns: 717fr 428fr 624fr 90px 61fr;
  grid-template-rows: 60px;
  align-items: center;
  background: #000;
`;
const Logo = styled.div`
  display: grid;
  margin-left: 57px;
  width: 176px;
  > * { grid-area: 1 / 1; }
  span { font: 700 20px/34px Lato, sans-serif; text-align: center; color: #fff; white-space: nowrap; }
`;
const Title = styled.p`
  margin: 0;
  font-family: "Noto Sans", "Noto Sans CJK JP", sans-serif;
  font-size: 32px;
  line-height: 48px;
  color: #5c5c5c;
  white-space: nowrap;
`;
const Kana = styled.span`
  font-family: "Noto Sans CJK JP", sans-serif;
  font-size: ${(p) => p.$s}px;
  font-feature-settings: "palt";
`;
const PageNo = styled.div`
  align-self: stretch;
  grid-column: 4;
  display: grid;
  place-items: center;
  background: #fe0000;
  color: #fff;
  font: 400 27px/40px "DejaVu Sans", sans-serif;
`;

/* ---------- annotations over the capture ---------- */
const Banner = styled.h1`
  position: absolute;
  left: 0;
  top: 57px;
  width: 534px;
  height: 76px;
  display: flex;
  align-items: baseline;
  gap: 22px;
  margin: 0;
  padding-left: 56px;
  font: 400 66px/74px "Noto Sans", "Noto Sans CJK JP", sans-serif;
  white-space: nowrap;
  color: #fff;
  background: ${ORANGE};
`;
const Mark = styled.span`
  position: absolute;
  left: ${(p) => p.$x}px;
  top: ${(p) => p.$y - 20}px;
  font: 700 36px/40px "DejaVu Sans", sans-serif;
  color: ${ORANGE};
`;
const CameraTag = styled.div`
  position: absolute;
  left: 1179px;
  top: 507px;
  width: 148px;
  height: 58px;
  padding-left: 27px;
  font: 700 25px/64px "DejaVu Sans Condensed", "DejaVu Sans", sans-serif;
  color: ${ORANGE};
  background: #373737;
`;
const Oval = styled.div`
  position: absolute;
  left: 944px;
  top: 494px;
  width: 257px;
  height: 92px;
  border: 6px solid ${ORANGE};
  border-radius: 50%;
`;
const Outline = styled.div`
  position: absolute;
  left: 111px;
  right: 93px;
  bottom: 57px;
  height: 49px;
  border: 6px solid ${ORANGE};
  border-radius: 8px;
`;

const KEYS = [1, 96, 106, 158, 168];
const pc = (f) => `${((f - 1) / 168) * 100}%`;
const Timeline = () => (
  <Track>
    <svg role="img" aria-label="Timeline">
      {KEYS.map((f) => <rect key={f} x={pc(f)} y="6" width={`${100 / 168}%`} height="16" fill="#417a0c" />)}
      <line x1="0" x2="100%" y1="13.5" y2="13.5" stroke="#6a6a6a" />
      {Array.from({ length: 168 }, (_, i) => i + 1).map((f) => (
        <line key={f} x1={pc(f)} x2={pc(f)} y1={f % 24 ? 11 : 9} y2={f % 24 ? 16 : 18} stroke="#767676" />
      ))}
      {[1, 24, 48, 72, 120, 144, 168].map((f) => <text key={f} x={pc(f)} y="6" fontSize="6" fill="#a8a8a8">{f}</text>)}
      <svg x={pc(96)} y="0" width="20" height="20">
        <path d="M-8 1 H8 V11 H3 L0 15 L-3 11 H-8 Z" fill="#0c120a" stroke="#4e8a24" />
        <text x="-4" y="9" fontSize="8" fill="#e4e4e4">96</text>
      </svg>
    </svg>
  </Track>
);
const P = ({ d }) => <svg width="13" height="9" viewBox="0 0 13 9"><path d={d} fill="#e8e8e8" /></svg>;

export default function App() {
  return (
    <Page>
      <Global />
      <MenuBar>
        <Menus>{["File", "Edit", "Render", "Assets", "Windows", "Arnold", "Labs", "Help", "FLAGSHIP"].map((m) => <MenuItem key={m}>{m}</MenuItem>)}</Menus>
        <TopSelect $w={76} $ml={21}>
          <svg width="9" height="9" viewBox="0 0 9 9" fill="none" stroke="#ccc"><path d="M.5 .5 H8.5 V8.5 H.5 Z M3.5 .5 V8.5 M3.5 4.5 H8.5" /></svg>
          <select aria-label="Desktop"><option>y347</option></select><UpDown />
        </TopSelect>
        <TopSelect $w={78} $ml={4}>
          <svg width="9" height="9" viewBox="0 0 9 9" fill="none" stroke="#ccc"><circle cx="4.5" cy="4.5" r="3.6" /><circle cx="4.5" cy="4.5" r="1.2" fill="#ccc" /></svg>
          <select aria-label="Radial menu"><option>Main</option></select><UpDown />
        </TopSelect>
        <Spacer />
        <TopSelect $w={108}>
          <Tool k="dots" />
          <select aria-label="Main take"><option>Main</option></select><UpDown />
        </TopSelect>
        <IconButton aria-label="Help" $w={14} $h={14}><RingMark kind="help" s={10} /></IconButton>
      </MenuBar>

      <Desk>
        <Pane>
          <Tabs items={["Scene Graph Tree"]} />
          <PathBar />
          <ToolRow $pad={12}><Tools list={["note", "ring", "slash", "hier", "bulb", "sphere", "wrench", "list", "bars", "frame"]} on={[6, 9]} dim={[2]} w={16} /></ToolRow>
          <TreeHead />
          <Tree />
          <FilterRow>
            <label><Check defaultChecked />Filter</label>
            <Field aria-label="Filter pattern" /><Caret c="#888" />
          </FilterRow>
        </Pane>
        <Split />

        <Pane>
          <Tabs items={["Scene View", "Scene Graph Layers"]} />
          <PathBar tail={<><IconButton aria-label="Solid" $w={15}><Tool k="cube" /></IconButton><IconButton aria-label="Flat" $w={15}><Tool k="square" /></IconButton></>} />
          <ToolRow $pad={8}>
            <Tools list={["dots"]} w={16} /><Spacer /><Tools list={["slash", "cup", "pose", "frame", "rows", "ring", "dots", "palette"]} on={[3]} dim={[5]} w={18} h={16} />
            <Spacer />
            <IconButton aria-label="Settings" $w={16}><Gear /></IconButton><IconButton aria-label="Help" $w={16}><RingMark kind="help" /></IconButton>
          </ToolRow>
          <ViewArea>
            <SideBar $w={22} $pad="60px 0 0 0">
              <ToolGroup $gap={2}><Tools list={["handle", "pose", "axes"]} w={16} /></ToolGroup>
              <ToolGroup $gap={2} $mt={6}><Tools list={["snapgrid", "snapcurve", "snappoint", "magnet"]} w={16} /></ToolGroup>
              <ToolGroup $gap={2} $mt={6}><Tools list={["reel", "region", "dome"]} on={[0]} w={16} /></ToolGroup>
              <Spacer />
              <ToolGroup $gap={1}><Tools list={["tray", "hand", "cone", "cup"]} w={16} /></ToolGroup>
            </SideBar>
            <Viewport>
              <Pills><Pill>Persp <Caret /></Pill><Pill>/cameras/camera1 <Caret /></Pill></Pills>
              <RenderedMenus />
              <Hint>Left mouse tumbles. Middle pans. Right dollies. Ctrl+Alt+Left box-zooms. Ctrl+Right zooms. Spacebar-Ctrl-Left tilts. Hold L for alternate tumble, dolly, and zoom. M or Alt+M for First Person Navigation.</Hint>
            </Viewport>
            <SideBar $w={16} $pad="6px 0 0 0">
              <ToolGroup $gap={1}><Tools list={["plane", "wire", "lock", "bulb", "sphere", "ring", "light", "lightfloor", "persp"]} on={[0, 6, 8]} /></ToolGroup>
              <ToolGroup $mt={7}><Tools list={["link", "frame", "layers", "moon"]} dim={[3]} /></ToolGroup>
              <ToolGroup $mt={6}><Tools list={["balls", "key", "reel", "spark"]} on={[0, 1, 2, 3]} /></ToolGroup>
              <Spacer />
              <Tools list={["eye"]} />
              <IconButton aria-label="Info" $w={15} $h={20}><RingMark kind="info" /></IconButton>
              <Tools list={["quad"]} on={[0]} />
            </SideBar>
          </ViewArea>
          <HSplit />
          <Tabs items={["Scene Graph Details", "Context Options Edi...", "Python Shell", "Performance Monitor", "Render Gallery", "Log Viewer", "Geometry Spreadsheet"]} />
          <PathBar h={21} />
          <ToolRow $h={21}>
            <Tools list={["tree", "list", "bars", "rows", "dots"]} on={[0, 2, 4]} />
            <Spacer /><Funnel /><Spacer />
            <IconButton aria-label="Snapshot help" $w={15}><Tool k="camq" /></IconButton>
            <IconButton aria-label="Help" $w={15}><RingMark kind="help" s={10} /></IconButton>
          </ToolRow>
          <Details>
            <Pane $bg="#2d2d2d">
              <DetailTable>
                <colgroup><col width="63" /><col /></colgroup>
                <thead><tr><th>Name</th><th>Value</th></tr></thead>
                <tbody>
                  <DetailRow $sel $c="#d6d0c0"><td colSpan="2"><RootLine><Knob />/sopimport1</RootLine></td></DetailRow>
                  {DETAILS.map(([n, v, c], i) => <DetailRow key={i} $odd={i % 2 === 0} $c={c}><td><PropName>{n}</PropName></td><td>{v}</td></DetailRow>)}
                </tbody>
              </DetailTable>
              <Spacer />
              <FilterRow $bg="#131313"><Funnel /><Field aria-label="Filter properties" /></FilterRow>
            </Pane>
            <Split />
            <Pane>
              <Row><MiniTab $on $b>Value</MiniTab><MiniTab $b>Metadata</MiniTab><MiniTab $b>Editor Nodes</MiniTab><MiniTab $b>Layer S</MiniTab><Spacer /><IconButton aria-label="Previous tabs" $w={8} $h={11}><Caret /></IconButton><IconButton aria-label="Next tabs" $w={8} $h={11}><RightCaret s={5} /></IconButton></Row>
            </Pane>
          </Details>
        </Pane>
        <Split />

        <Pane>
          <Shelves>
            <Shelf tabs={["Test Geometry", "Oceans"]} icons={<Blobs list={[["fig", "#5a5a4a"], ["blob", "#8a3a2c"], ["blob", "#2a6ad0"], ["head", "#3aa8d8"], ["blob", "#444"], ["fig", "#888"], ["head", "#999"], ["fig", "#b07868"]]} />} />
            <Split />
            <Shelf tabs={["LOP Lights and Cameras"]} icons={<Blobs list={[["blob", "#333"], ["sun", "#f2e478"], ["blob", "#d8d4c0"], ["area", "#e4cc4c"], ["fig", "#c89a5c"], ["blob", "#e0cc3c"], ["", "#dcc93c"], ["head", "#e4b838"]]} />} />
          </Shelves>
          <Tabs items={["/stage"]} />
          <PathBar h={20}>
            <IconButton aria-label="Link group 1" $w={15}><svg width="14" height="14" viewBox="0 0 14 14"><circle cx="7" cy="7" r="6.3" fill="none" stroke="#bbb" /><text x="5" y="9.6" fontSize="7" fill="#ddd">1</text></svg></IconButton>
            <IconButton aria-label="Follow" $w={13}><Target /></IconButton>
          </PathBar>
          <ToolRow $h={15} $pad={1} $pr={1}>
            <Menus $pad={11} $gap={9}>{["Add", "Edit", "Go", "View", "Tools", "Layout", "Labs", "Help"].map((m) => <MenuItem key={m}>{m}</MenuItem>)}</Menus>
            <Spacer />
            <Row><Tools list={["wrench", "hier", "page"]} h={14} /></Row><Gap $w={10} />
            <Row><Tools list={["palette", "dotgrid"]} h={14} /></Row><Gap $w={10} />
            <Row><Tools list={["image", "note", "photo", "crate"]} h={14} /></Row><Gap $w={10} />
            <Row><IconButton aria-label="Find" $w={15} $h={14}><Magnifier /></IconButton><Tools list={["eye"]} h={14} /></Row>
          </ToolRow>
          <Canvas>
            <Watermark $t={8}>Solaris</Watermark>
            <Graph />
            <Badge>i</Badge>
            <Loose>2 Layers</Loose>
            {NODES.map((n) => (
              <NodeText key={n.n} $x={n.x} $y={n.y}>
                {n.n}
                {n.clock && <ClockLine><Clock /></ClockLine>}
                <Info $mt={n.clock ? 3 : 6} $c={n.c}>{n.info.map((t) => <div key={t}>{t}</div>)}</Info>
              </NodeText>
            ))}
            <CanvasStatus>camera1 (Camera) node</CanvasStatus>
          </Canvas>
        </Pane>
        <Split />

        <Pane $bg="#2f2f2f">
          <Tabs items={["/obj/geo1"]} />
          <PathRow>
            <IconButton aria-label="Back" $w={14}><Arrow dim /></IconButton><IconButton aria-label="Forward" $w={14}><Arrow flip dim /></IconButton>
            <PathBox><Tool k="hier" /><input aria-label="Object path" defaultValue="obj" /></PathBox>
            <Target />
          </PathRow>
          <ToolRow $h={15}><Menus $pad={20} $gap={9}>{["Add", "Edit", "Go"].map((m) => <MenuItem key={m}>{m}</MenuItem>)}</Menus><Gap $w={3} /><IconButton aria-label="More menus" $w={6}><RightCaret s={5} /></IconButton></ToolRow>
          <Watermark $t={55}>Geometry</Watermark>
        </Pane>
        <Split />

        <Pane>
          <Tabs items={["camera1"]} />
          <PathBar />
          <NodeName>
            <Tool k="reel" /><label htmlFor="nodename">Camera</label><Field id="nodename" defaultValue="camera1" />
            <IconButton aria-label="Gear" $w={14}><Gear /></IconButton><IconButton aria-label="Brush" $w={14}><Brush /></IconButton><IconButton aria-label="Search" $w={14}><Magnifier /></IconButton>
            <IconButton aria-label="Info" $w={14}><RingMark kind="info" /></IconButton><IconButton aria-label="Help" $w={14}><RingMark kind="help" /></IconButton>
          </NodeName>
          <Param tri id="range" label="Frame Range/Subframes"><Drop $w={186}><select id="range"><option>Sample Current Frame</option></select><UpDown /></Drop></Param>
          <Param id="prim" label="Primitive Path"><Field id="prim" defaultValue="/cameras/$OS" /><DropBtn /><IconButton aria-label="Pick" $w={12}><Pointer h={11} /></IconButton></Param>
          <Param id="action" label="Action"><Drop $w={124}><select id="action"><option>Create</option></select><UpDown /></Drop></Param>
          <Param id="init" label="Initialize Parameters"><Drop $w={108}><select id="init"><option>Initialize Parameters</option></select><Caret c="#888" /></Drop></Param>
          <Group $pad="1px 0 0 1px"><Row><MiniTab $b>Transform</MiniTab><MiniTab $on $b>View</MiniTab><MiniTab $b>Sampling</MiniTab><MiniTab $dim>Karma</MiniTab></Row></Group>
          <Group $pad="4px 0 0">
            <Param pen id="proj" label="Projection"><Drop $w={67}><select id="proj"><option>Perspective</option></select><UpDown /></Drop></Param>
            <Param pen id="clip" label="Clipping Range"><Field id="clip" defaultValue="1" /><Field aria-label="Far clip" defaultValue="1e+06" /></Param>
            <Param pen id="focal" label="Focal Length"><NumSlider id="focal" v="18" pct={17} b /></Param>
          </Group>
          <Section $h={14} $b>Aperture</Section>
          <Group $pad="3px 0 0" $bg="#363636">
            <Param h={15} id="ctl" label="Control Aperture"><IconButton id="ctl" aria-label="Control Aperture" $w={12}><Pencil /></IconButton></Param>
            <Param h={15} id="hap" label="Horizontal Aperture"><NumSlider id="hap" v="20.955" pct={20} /></Param>
            <Param h={15} id="asp" label="Aspect Ratio"><Field id="asp" defaultValue="1920" $b /><Field aria-label="Aspect height" defaultValue="1080" $b /><DropBtn /></Param>
          </Group>
          <Section $pl={4}><Caret c="#eee" s={6} />Offsets</Section>
          <Group $pad="4px 0 6px" $bg="#343434">
            <Param pen id="hoff" label="Horizontal Apert..."><NumSlider id="hoff" v="0" pct={0} /></Param>
            <Param pen id="voff" label="Vertical Aperture..."><NumSlider id="voff" v="0" pct={0} /></Param>
          </Group>
          <Section $h={16}>Viewport Control</Section>
          <Group $pad="3px 0 2px" $bg="#353535">
            <Param pen id="scale" label="Scale Guide Geo..."><NumSlider id="scale" v="1" pct={10} bg="#663a66" /></Param>
            <Param pen id="show" label="" gap={4} h={15}><Check id="show" defaultChecked /><ParamLabel htmlFor="show">Show in Viewport Camera Menu</ParamLabel></Param>
            <Param pen id="bg" label="Background Image"><Field id="bg" /><DropBtn /><IconButton aria-label="Open file" $w={13}><FileIcon /></IconButton></Param>
            <Param pen id="fg" label="Foreground Image"><Field id="fg" /><DropBtn /><IconButton aria-label="Open file" $w={13}><FileIcon /></IconButton></Param>
          </Group>
          <Group $pad="17px 0 0">
            <Param h={15} id="sample_f1" label="sample_f1"><NumSlider id="sample_f1" v="1" pct={10} b bg="#3f7f7f" /></Param>
            <Param h={15} id="sample_f2" label="sample_f2"><NumSlider id="sample_f2" v="168" pct={100} b bg="#3f7f7f" /></Param>
            <Param h={15} id="sample_f3" label="sample_f3"><NumSlider id="sample_f3" v="1" pct={10} b bg="#3f7f7f" /></Param>
          </Group>
        </Pane>
      </Desk>

      <PlayBar>
        <Stack>
          <Transport>
            <PlayBtn aria-label="First frame"><P d="M0 0 H1.5 V9 H0 Z M7 0 V9 L2 4.5 Z M12.5 0 V9 L7.5 4.5 Z" /></PlayBtn>
            <PlayBtn aria-label="Play back"><P d="M9 0 V9 L3 4.5 Z" /></PlayBtn>
            <PlayBtn aria-label="Stop" $on><P d="M2.5 0 H10.5 V9 H2.5 Z" /></PlayBtn>
            <PlayBtn aria-label="Play"><P d="M4 0 V9 L10 4.5 Z" /></PlayBtn>
            <PlayBtn aria-label="Last frame"><P d="M13 0 H11.5 V9 H13 Z M6 0 V9 L11 4.5 Z M.5 0 V9 L5.5 4.5 Z" /></PlayBtn>
            <Frame aria-label="Frame" defaultValue="96" />
            <PlayBtn aria-label="Step back" $w={9}><svg width="6" height="6" viewBox="0 0 6 6"><path d="M4 0 V6 L0 3 Z M5 0 H6 V6 H5 Z" fill="#ddd" /></svg></PlayBtn>
            <PlayBtn aria-label="Step forward" $w={9}><svg width="6" height="6" viewBox="0 0 6 6"><path d="M2 0 V6 L6 3 Z M0 0 H1 V6 H0 Z" fill="#ddd" /></svg></PlayBtn>
          </Transport>
          <Transport>{["page", "key", "reel", "region", "rows"].map((k, i) => <PlayBtn key={k} aria-label={k} $on={i === 3}><Tool k={k} /></PlayBtn>)}</Transport>
        </Stack>
        <Timeline />
        <KeyButton aria-label="Set key"><svg width="10" height="10" viewBox="0 0 10 10" fill="none" stroke="#fff"><circle cx="6.4" cy="3.4" r="2.4" strokeWidth="1.4" /><path d="M5 5.2 L1 9 M2.4 7.6 L4 9" strokeWidth="1.4" /></svg></KeyButton>
        <IconButton aria-label="Key menu" $w={10} $h={24}><Caret /></IconButton>
        <Stack><IconButton aria-label="Refresh keys" $w={17} $h={15}><Tool k="image" /></IconButton><IconButton aria-label="Scope" $w={17}><Tool k="image" /></IconButton></Stack>
        <Gap $w={9} />
        <Stack><KeysButton>3 keys, 3/3 channels<UpDown /></KeysButton><KeysButton>Key All Channels<UpDown /></KeysButton></Stack>
      </PlayBar>

      <Footer>
        <Logo>
          <svg width="176" height="40" viewBox="0 0 176 40"><path d="M3 3 H171 Q173 3 173 5 V29 Q173 32 171 32 H14 M3 3 V25 L13 36 V32" fill="none" stroke="#fff" strokeWidth="4" strokeLinejoin="round" /></svg>
          <span>BANDAI NAMCO</span>
        </Logo>
        <Title>Houdini <Kana $s={29}>による</Kana> UI <Kana $s={30}>作成について</Kana></Title>
        <PageNo>99</PageNo>
      </Footer>

      <Banner><Kana $s={55}>メニュー画面</Kana><span>LOP</span></Banner>
      <CameraTag>camera</CameraTag>
      <Oval />
      <Outline />
      <Mark $x={141} $y={950}>1</Mark>
      <Mark $x={1005} $y={950}>95</Mark>
      <Mark $x={1064} $y={950}>96</Mark>
      <Mark $x={1141} $y={950}>106</Mark>
      <Mark $x={1590} $y={947}>158</Mark>
      <Mark $x={1723} $y={947}>168</Mark>
    </Page>
  );
}
